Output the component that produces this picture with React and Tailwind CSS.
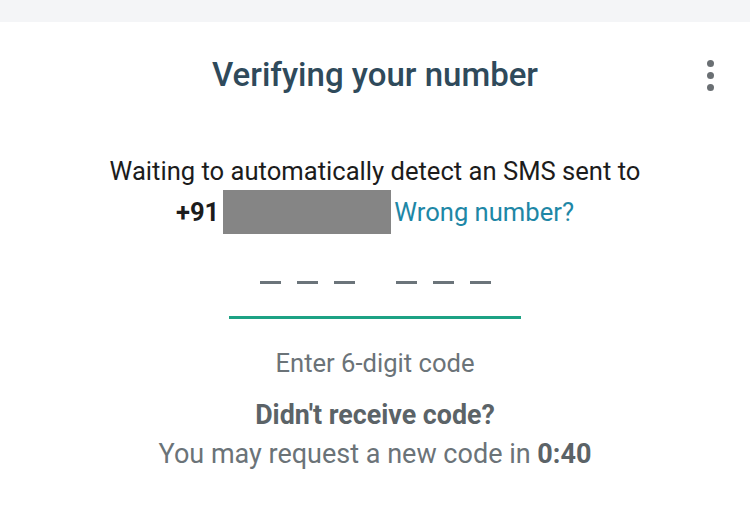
import React from 'react';

function Kebab() {
  return (
    <div className="flex flex-col items-center gap-[5px]">
      <span className="block w-[7px] h-[7px] rounded-full bg-[#6a6f73]" />
      <span className="block w-[7px] h-[7px] rounded-full bg-[#6a6f73]" />
      <span className="block w-[7px] h-[7px] rounded-full bg-[#6a6f73]" />
    </div>
  );
}

function Dashes() {
  return (
    <div className="flex gap-[16px]">
      <span className="block w-[21px] h-[3px] bg-[#6b747a]" />
      <span className="block w-[21px] h-[3px] bg-[#6b747a]" />
      <span className="block w-[21px] h-[3px] bg-[#6b747a]" />
    </div>
  );
}

export default function App() {
  return (
    <div className="w-[750px] h-[508px] bg-white overflow-hidden" style={{ fontFamily: 'Roboto, "Noto Sans", sans-serif' }}>
      <div className="h-[22px] bg-[#f4f5f7]" />

      {/* Title bar */}
      <div className="grid grid-cols-[1fr_auto_1fr] items-center mt-[35px]">
        <div />
        <h1 className="text-[33px] leading-[36px] font-medium text-[#2f4a5b]">Verifying your number</h1>
        <div className="flex justify-end pr-[36px]">
          <Kebab />
        </div>
      </div>

      {/* Message */}
      <div className="mt-[63px] flex flex-col items-center">
        <p className="text-[25.6px] leading-[30px] text-[#1c1c1c]">
          Waiting to automatically detect an SMS sent to
        </p>
        <div className="flex items-center mt-[4px] h-[44px]">
          <span className="text-[25.6px] font-bold text-[#1c1c1c]">+91</span>
          <span className="block w-[168px] h-[44px] bg-[#858585] ml-[4px]" />
          <span className="text-[25.6px] text-[#1e87a6] ml-[3px]">Wrong number?</span>
        </div>
      </div>

      {/* Code input */}
      <div className="flex flex-col items-center mt-[47px]">
        <div className="flex gap-[41px]">
          <Dashes />
          <Dashes />
        </div>
        <div className="w-[292px] h-[3px] bg-[#1da284] mt-[32px]" />
        <p className="mt-[29px] text-[25.6px] leading-[30px] text-[#6b7378]">Enter 6-digit code</p>
        <p className="mt-[22px] text-[26.8px] leading-[30px] font-bold text-[#5b6367]">Didn't receive code?</p>
        <p className="mt-[8px] text-[27px] leading-[32px] text-[#6b7378]">
          You may request a new code in <span className="font-bold text-[#5b6367]">0:40</span>
        </p>
      </div>
    </div>
  );
}
